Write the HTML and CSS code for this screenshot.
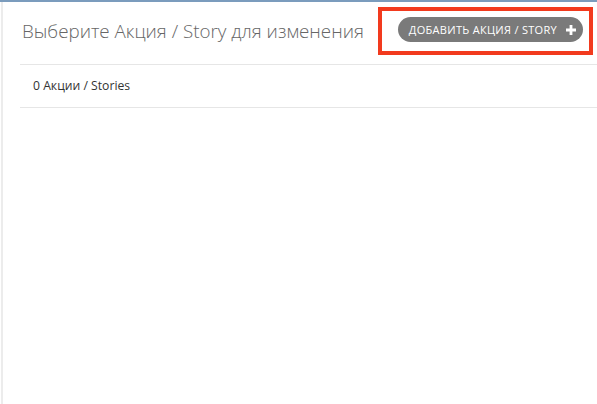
FILE: index.html
```html
<!DOCTYPE html>
<html lang="ru">
<head>
<meta charset="utf-8">
<link rel="stylesheet" href="styles.css">
</head>
<body>
<div class="topbar"></div>
<div class="page">
  <div class="content">
    <header class="head">
      <h1 class="title">Выберите Акция / Story для изменения</h1>
      <div class="highlight">
        <a class="addbtn" href="#">ДОБАВИТЬ АКЦИЯ / STORY
          <svg class="plus" viewBox="0 0 10 10" width="10" height="10"><path d="M3.6 0h2.8v3.6H10v2.8H6.4V10H3.6V6.4H0V3.6h3.6z" fill="#fff"/></svg>
        </a>
      </div>
    </header>
    <div class="count">0 Акции / Stories</div>
  </div>
</div>
</body>
</html>
```
FILE: styles.css
```css
html, body {
  margin: 0;
  padding: 0;
  background: #fff;
}
body {
  font-family: "Open Sans", "Liberation Sans", sans-serif;
  color: #333;
  height: 404px;
  overflow: hidden;
}
.topbar {
  height: 2px;
  background: #7b9cbd;
}
.page {
  border-left: 2px solid #ececec;
  margin-left: 1px;
  height: 402px;
  box-sizing: border-box;
}
.content {
  padding-left: 17px;
}
.head {
  display: flex;
  align-items: flex-start;
  justify-content: space-between;
  height: 62px;
  border-bottom: 1px solid #e6e6e6;
}
.title {
  margin: 16px 0 0;
  padding-left: 2px;
  font-size: 18.8px;
  line-height: normal;
  font-weight: 300;
  color: #666;
}
.highlight {
  margin: 5px 4px 0 0;
  border: 4px solid #f23a1e;
  padding: 6px 6px 9px 16px;
}
.addbtn {
  display: flex;
  align-items: center;
  gap: 9px;
  height: 25px;
  padding: 0 7px 0 11px;
  border-radius: 13px;
  background: #7a7a7a;
  color: #fff;
  text-decoration: none;
  font-size: 11px;
  font-weight: 500;
  letter-spacing: 0.3px;
}
.plus {
  display: block;
}
.count {
  height: 42px;
  line-height: 42px;
  padding-left: 13px;
  font-size: 12.2px;
  color: #333;
  border-bottom: 1px solid #e6e6e6;
}
```
